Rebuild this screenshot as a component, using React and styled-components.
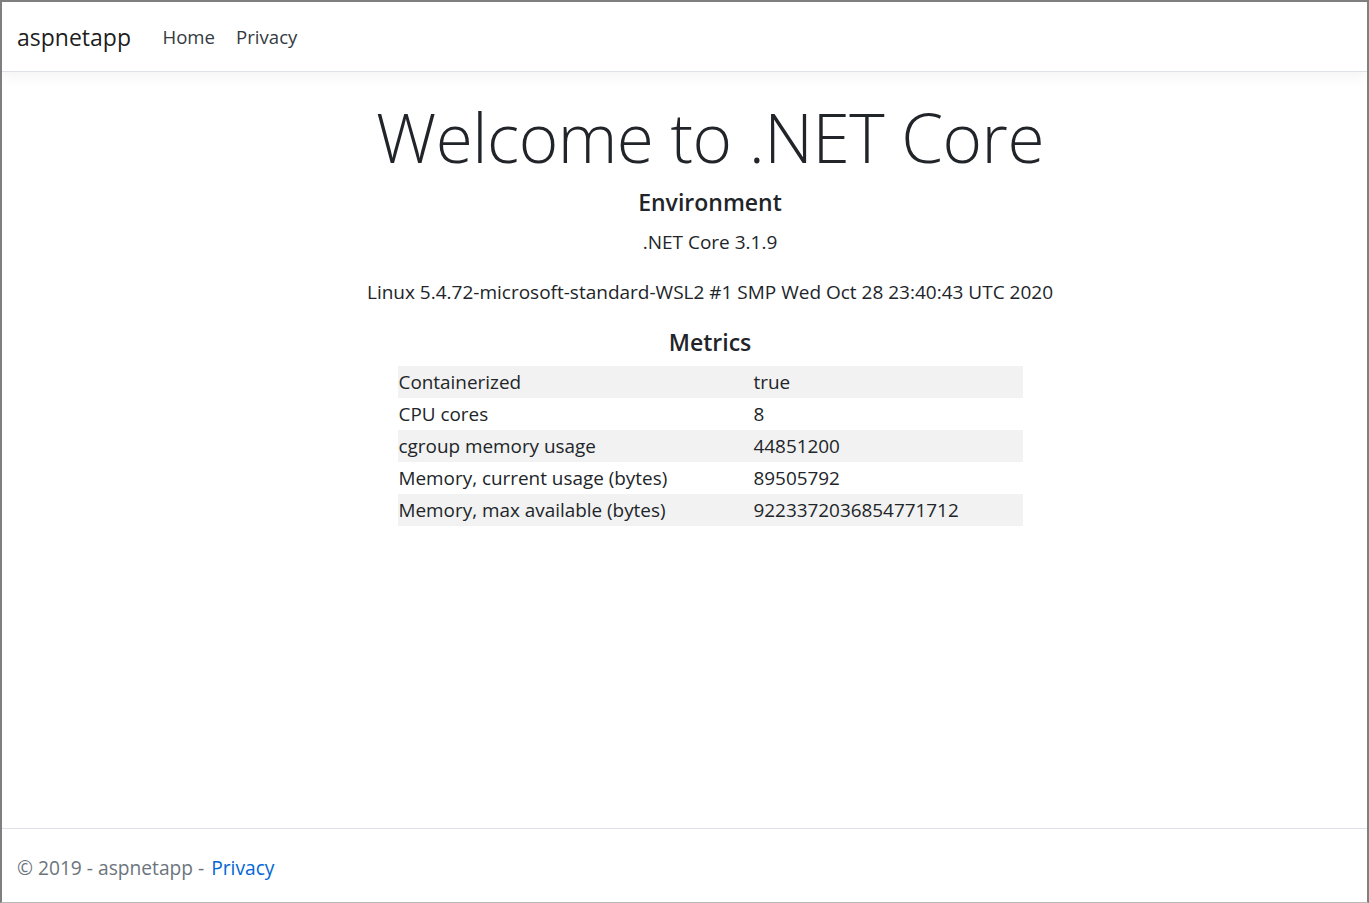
import React from "react";
import styled, { createGlobalStyle } from "styled-components";

const Global = createGlobalStyle`
  html, body { margin: 0; padding: 0; background: #ffffff; }
  body { font-family: "Open Sans", "Noto Sans", sans-serif; color: #212529; }
  * { box-sizing: border-box; }
`;

const Frame = styled.div`
  width: 1369px;
  height: 903px;
  border-top: 2px solid #7f7f7f;
  border-left: 2px solid #7f7f7f;
  border-right: 2px solid #7f7f7f;
  border-bottom: 1px solid #b9b9b9;
  display: flex;
  flex-direction: column;
  overflow: hidden;
`;

const NavBar = styled.nav`
  height: 70px;
  flex: none;
  display: flex;
  align-items: center;
  padding: 0 15px;
  background: #fff;
  border-bottom: 1px solid #dee2e6;
  box-shadow: 0 4px 14px rgba(0, 0, 0, 0.05);
  position: relative;
  z-index: 1;
`;

const Brand = styled.a`
  font-size: 23px;
  color: rgba(0, 0, 0, 0.9);
  text-decoration: none;
  margin-right: 21px;
  line-height: 30px;
`;

const NavLink = styled.a`
  font-size: 18.6px;
  color: #343a40;
  text-decoration: none;
  padding: 0 10.5px;
  line-height: 28px;
`;

const Main = styled.main`
  flex: 1;
  padding: 20px 15px 0 66px;
  display: flex;
  flex-direction: column;
  align-items: center;
  text-align: center;
`;

const Title = styled.h1`
  margin: 0;
  font-size: 67.5px;
  font-weight: 300;
  line-height: 90px;
  color: #212529;
  letter-spacing: -0.5px;
`;

const SubHeading = styled.h3`
  margin: ${(p) => p.$mt}px 0 0;
  font-size: 23px;
  font-weight: 600;
  line-height: 32px;
  color: #212529;
`;

const Line = styled.p`
  margin: ${(p) => p.$mt}px 0 0;
  font-size: 19px;
  line-height: 28px;
  color: #212529;
`;

const Table = styled.table`
  margin-top: 8px;
  width: 625px;
  border-collapse: collapse;
  text-align: left;
`;

const Row = styled.tr`
  background: ${(p) => (p.$striped ? "#f2f2f2" : "transparent")};
  height: 32px;
`;

const Cell = styled.td`
  padding: 0 1px;
  font-size: 18.9px;
  line-height: 32px;
  color: #212529;
  width: ${(p) => p.$w || "auto"};
`;

const Footer = styled.footer`
  flex: none;
  height: 74px;
  border-top: 1px solid #dee2e6;
  display: flex;
  align-items: center;
  padding: 4px 15px 0 15px;
  font-size: 19.2px;
  color: #6c757d;
`;

const FooterLink = styled.a`
  color: #0366d6;
  text-decoration: none;
  margin-left: 7px;
`;

const metrics = [
  ["Containerized", "true"],
  ["CPU cores", "8"],
  ["cgroup memory usage", "44851200"],
  ["Memory, current usage (bytes)", "89505792"],
  ["Memory, max available (bytes)", "9223372036854771712"],
];

export default function App() {
  return (
    <>
      <Global />
      <Frame>
        <NavBar>
          <Brand href="#">aspnetapp</Brand>
          <NavLink href="#">Home</NavLink>
          <NavLink href="#">Privacy</NavLink>
        </NavBar>
        <Main>
          <Title>Welcome to .NET Core</Title>
          <SubHeading $mt={4}>Environment</SubHeading>
          <Line $mt={10}>.NET Core 3.1.9</Line>
          <Line $mt={22}>Linux 5.4.72-microsoft-standard-WSL2 #1 SMP Wed Oct 28 23:40:43 UTC 2020</Line>
          <SubHeading $mt={20}>Metrics</SubHeading>
          <Table>
            <tbody>
              {metrics.map(([k, v], i) => (
                <Row key={k} $striped={i % 2 === 0}>
                  <Cell $w="355px">{k}</Cell>
                  <Cell>{v}</Cell>
                </Row>
              ))}
            </tbody>
          </Table>
        </Main>
        <Footer>
          © 2019 - aspnetapp -<FooterLink href="#">Privacy</FooterLink>
        </Footer>
      </Frame>
    </>
  );
}
